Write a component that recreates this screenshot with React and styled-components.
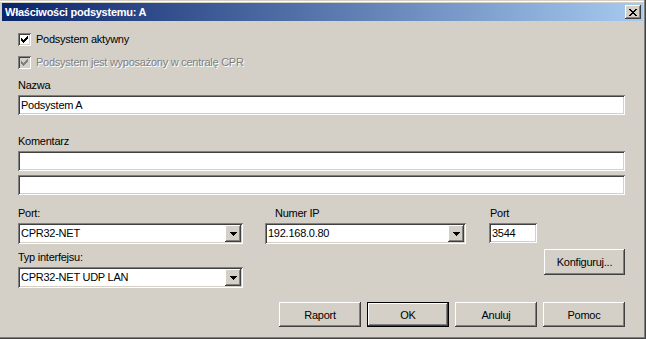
import React from 'react';
import styled, { createGlobalStyle } from 'styled-components';

const GlobalStyle = createGlobalStyle`
  html, body {
    margin: 0;
    padding: 0;
    background: #d4d0c8;
  }
  body {
    font-family: "Liberation Sans", Arial, sans-serif;
    font-size: 11px;
    letter-spacing: -0.25px;
    color: #000;
  }
`;

// classic win bevels
const raised = `
  inset -1px -1px #404040,
  inset 1px 1px #ffffff,
  inset -2px -2px #808080,
  inset 2px 2px #d4d0c8
`;

const sunken = `
  inset 1px 1px #808080,
  inset -1px -1px #ffffff,
  inset 2px 2px #404040,
  inset -2px -2px #d4d0c8
`;

const Window = styled.div`
  width: 646px;
  height: 339px;
  box-sizing: border-box;
  padding: 3px 3px 2px 2px;
  background: #d4d0c8;
  box-shadow: inset -1px -1px #404040, inset -2px -2px #808080,
    inset 0 1px #d4d0c8, inset 0 2px #ffffff;
  display: flex;
  flex-direction: column;
`;

const TitleBar = styled.div`
  height: 18px;
  display: flex;
  align-items: center;
  justify-content: space-between;
  padding: 0 2px 0 3px;
  background: linear-gradient(to right, #0a246a, #a6caf0);
`;

const Title = styled.span`
  color: #fff;
  font-weight: bold;
  font-size: 11px;
  line-height: 13px;
`;

const CloseButton = styled.button`
  width: 16px;
  height: 14px;
  padding: 0 1px 0 0;
  border: none;
  background: #d4d0c8;
  box-shadow: ${raised};
  display: flex;
  align-items: center;
  justify-content: center;
`;

const Body = styled.div`
  flex: 1;
  display: flex;
  flex-direction: column;
  padding: 0 18px 0 16px;
`;

const CheckRow = styled.label`
  display: flex;
  align-items: center;
  gap: 5px;
  height: 13px;
  line-height: 13px;
  margin-top: ${(p) => p.$top}px;
  color: ${(p) => (p.$disabled ? '#808080' : '#000')};
  text-shadow: ${(p) => (p.$disabled ? '1px 1px #ffffff' : 'none')};
`;

const Box = styled.span`
  width: 13px;
  height: 13px;
  box-sizing: border-box;
  background: ${(p) => (p.$disabled ? '#d4d0c8' : '#ffffff')};
  box-shadow: ${sunken};
  display: flex;
  align-items: center;
  justify-content: center;
  flex-shrink: 0;
`;

const Label = styled.div`
  height: 13px;
  line-height: 13px;
  margin-top: ${(p) => p.$top || 0}px;
  padding-left: ${(p) => p.$indent || 0}px;
  white-space: nowrap;
`;

const TextField = styled.div`
  height: 20px;
  width: ${(p) => (p.$width ? `${p.$width}px` : 'auto')};
  box-sizing: border-box;
  margin-top: ${(p) => p.$top || 0}px;
  padding: 0 3px;
  background: #fff;
  box-shadow: ${sunken};
  line-height: 20px;
  white-space: nowrap;
`;

const Combo = styled.div`
  height: 21px;
  width: ${(p) => p.$width}px;
  box-sizing: border-box;
  margin-top: 3px;
  padding: 2px 2px 2px 3px;
  background: #fff;
  box-shadow: ${sunken};
  display: flex;
  align-items: center;
  justify-content: space-between;
`;

const ComboValue = styled.span`
  line-height: 17px;
  white-space: nowrap;
`;

const DropButton = styled.span`
  width: 16px;
  height: 17px;
  background: #d4d0c8;
  box-shadow: ${raised};
  display: flex;
  align-items: center;
  justify-content: center;
`;

const LowerRow = styled.div`
  display: flex;
  margin-top: 12px;
`;

const Column = styled.div`
  display: flex;
  flex-direction: column;
  width: ${(p) => (p.$width ? `${p.$width}px` : 'auto')};
  flex: ${(p) => (p.$grow ? 1 : 'none')};
  margin-left: ${(p) => p.$left || 0}px;
`;

const Button = styled.button`
  width: ${(p) => p.$width || 82}px;
  height: ${(p) => p.$height || 25}px;
  padding: 0;
  border: none;
  background: #d4d0c8;
  font-family: "Liberation Sans", Arial, sans-serif;
  font-size: 11px;
  letter-spacing: -0.25px;
  color: #000;
  box-shadow: ${(p) =>
    p.$default
      ? `inset 0 0 0 1px #000000, inset -2px -2px #404040, inset 2px 2px #ffffff,
         inset -3px -3px #808080, inset 3px 3px #d4d0c8`
      : raised};
`;

const SideButton = styled(Button)`
  align-self: flex-end;
  margin-top: 6px;
`;

const ButtonRow = styled.div`
  display: flex;
  justify-content: flex-end;
  gap: 6px;
  margin-top: 14px;
`;

function CloseGlyph() {
  const rows = [
    [0, 0, 2], [6, 0, 2],
    [1, 1, 2], [5, 1, 2],
    [2, 2, 4],
    [3, 3, 2],
    [2, 4, 4],
    [1, 5, 2], [5, 5, 2],
    [0, 6, 2], [6, 6, 2],
  ];
  return (
    <svg width="8" height="7" viewBox="0 0 8 7" shapeRendering="crispEdges">
      {rows.map(([x, y, w], i) => (
        <rect key={i} x={x} y={y} width={w} height="1" fill="#000" />
      ))}
    </svg>
  );
}

function CheckGlyph({ color }) {
  const rows = [
    [6, 0, 1],
    [5, 1, 2],
    [0, 2, 1], [4, 2, 3],
    [0, 3, 2], [3, 3, 3],
    [0, 4, 5],
    [1, 5, 3],
    [2, 6, 1],
  ];
  return (
    <svg width="7" height="7" viewBox="0 0 7 7" shapeRendering="crispEdges">
      {rows.map(([x, y, w], i) => (
        <rect key={i} x={x} y={y} width={w} height="1" fill={color} />
      ))}
    </svg>
  );
}

function ArrowGlyph() {
  return (
    <svg width="7" height="4" viewBox="0 0 7 4" shapeRendering="crispEdges">
      <rect x="0" y="0" width="7" height="1" fill="#000" />
      <rect x="1" y="1" width="5" height="1" fill="#000" />
      <rect x="2" y="2" width="3" height="1" fill="#000" />
      <rect x="3" y="3" width="1" height="1" fill="#000" />
    </svg>
  );
}

function Checkbox({ label, disabled, top }) {
  return (
    <CheckRow $top={top} $disabled={disabled}>
      <Box $disabled={disabled}>
        <CheckGlyph color={disabled ? '#808080' : '#000000'} />
      </Box>
      {label}
    </CheckRow>
  );
}

function ComboBox({ value, width }) {
  return (
    <Combo $width={width}>
      <ComboValue>{value}</ComboValue>
      <DropButton>
        <ArrowGlyph />
      </DropButton>
    </Combo>
  );
}

export default function App() {
  return (
    <>
      <GlobalStyle />
      <Window>
        <TitleBar>
          <Title>Właściwości podsystemu: A</Title>
          <CloseButton aria-label="Zamknij">
            <CloseGlyph />
          </CloseButton>
        </TitleBar>

        <Body>
          <Checkbox top={12} label="Podsystem aktywny" />
          <Checkbox top={10} disabled label="Podsystem jest wyposażony w centralę CPR" />

          <Label $top={10}>Nazwa</Label>
          <TextField $top={3}>Podsystem A</TextField>

          <Label $top={20}>Komentarz</Label>
          <TextField $top={3} />
          <TextField $top={4} />

          <LowerRow>
            <Column $width={225}>
              <Label>Port:</Label>
              <ComboBox value="CPR32-NET" width={225} />
              <Label $top={7}>Typ interfejsu:</Label>
              <ComboBox value="CPR32-NET UDP LAN" width={225} />
            </Column>

            <Column $width={201} $left={22}>
              <Label $indent={10}>Numer IP</Label>
              <ComboBox value="192.168.0.80" width={201} />
            </Column>

            <Column $grow $left={23}>
              <Label $indent={1}>Port</Label>
              <TextField $top={3} $width={48}>3544</TextField>
              <SideButton $width={81} $height={26}>Konfiguruj...</SideButton>
            </Column>
          </LowerRow>

          <ButtonRow>
            <Button>Raport</Button>
            <Button $default>OK</Button>
            <Button>Anuluj</Button>
            <Button>Pomoc</Button>
          </ButtonRow>
        </Body>
      </Window>
    </>
  );
}
